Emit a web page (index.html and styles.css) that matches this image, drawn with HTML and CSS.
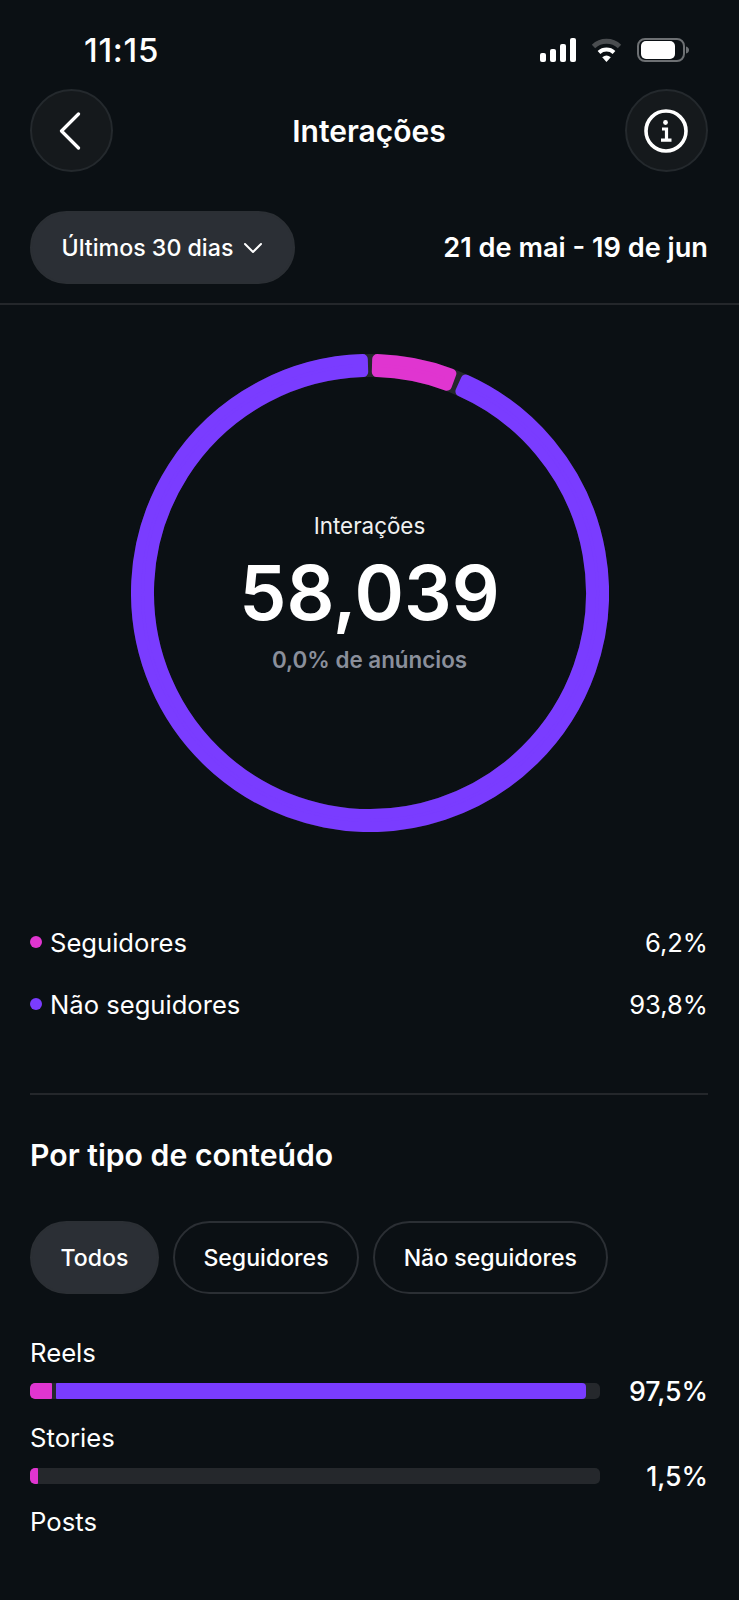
FILE: index.html
```html
<!DOCTYPE html>
<html lang="pt">
<head>
    <meta charset="UTF-8">
    <meta name="viewport" content="width=device-width, initial-scale=1.0">
    <title>Interações</title>
    <link rel="stylesheet" href="styles.css">
</head>
<body>

<div class="status-bar">
    <span class="clock">11:15</span>
    <div class="status-icons">
        <svg width="36" height="24" viewBox="0 0 36 24" fill="#fff">
            <rect x="0" y="15" width="6" height="9" rx="2"/>
            <rect x="10" y="11" width="6" height="13" rx="2"/>
            <rect x="20" y="6" width="6" height="18" rx="2"/>
            <rect x="30" y="0" width="6" height="24" rx="2"/>
        </svg>
        <svg width="31" height="24" viewBox="0 0 31 24" fill="none">
            <path d="M2.5 8.5A19 19 0 0 1 28.5 8.5" stroke="#4a4d50" stroke-width="5"/>
            <path d="M8 14.5A11 11 0 0 1 23 14.5" stroke="#fff" stroke-width="4"/>
            <path d="M11.2 19.2Q15.5 15.8 19.8 19.2L15.5 24Z" fill="#fff"/>
        </svg>
        <svg width="52" height="24" viewBox="0 0 52 24" fill="none">
            <rect x="1" y="1" width="46" height="22" rx="7" stroke="#6d7073" stroke-width="2"/>
            <rect x="4" y="3" width="34" height="18" rx="5" fill="#fff"/>
            <path d="M49 8.5Q52 9.5 52 12T49 15.5Z" fill="#6d7073"/>
        </svg>
    </div>
</div>

<header class="top-bar">
    <button class="round-btn">
        <svg class="back-icon" width="22" height="38" viewBox="0 0 22 38" fill="none" stroke="#fff" stroke-width="3.2" stroke-linecap="round" stroke-linejoin="round">
            <path d="M19.5 2L2.5 19L19.5 36"/>
        </svg>
    </button>
    <h1 class="title">Interações</h1>
    <button class="round-btn">
        <svg width="44" height="44" viewBox="0 0 44 44" fill="none" stroke="#fff">
            <circle cx="22" cy="22" r="20" stroke-width="3.6"/>
            <circle cx="21.5" cy="13.5" r="2.4" fill="#fff" stroke="none"/>
            <path d="M18 20H22.5V31M17 31.2H27.5" stroke-width="3.2"/>
        </svg>
    </button>
</header>

<div class="range-row">
    <div class="pill pill-active range-pill">
        Últimos 30 dias
        <svg width="20" height="12" viewBox="0 0 20 12" fill="none" stroke="#fff" stroke-width="2" stroke-linecap="round" stroke-linejoin="round">
            <path d="M2 2L10 10L18 2"/>
        </svg>
    </div>
    <span class="range-dates">21 de mai - 19 de jun</span>
</div>

<section class="ring-section">
    <div class="ring">
        <svg width="478" height="478" viewBox="-239 -239 478 478">
            <circle class="ring-track" r="227.5"/>
            <!-- segments are inset by 5 and stroked with a round join to get soft corners -->
            <path class="seg seg-purple" d="M95.76 -213.51A234 234 0 1 1 -7.19 -233.89L-6.79 -220.90A221 221 0 1 0 90.44 -201.65Z"/>
            <path class="seg seg-pink" d="M7.19 -233.89A234 234 0 0 1 81.37 -219.40L76.85 -207.21A221 221 0 0 0 6.79 -220.90Z"/>
        </svg>
        <div class="ring-center">
            <div class="ring-label">Interações</div>
            <div class="ring-value">58,039</div>
            <div class="ring-note">0,0% de anúncios</div>
        </div>
    </div>
</section>

<section class="legend">
    <div class="legend-row">
        <span class="dot dot-pink"></span>
        <span class="legend-name">Seguidores</span>
        <span>6,2%</span>
    </div>
    <div class="legend-row">
        <span class="dot dot-purple"></span>
        <span class="legend-name">Não seguidores</span>
        <span>93,8%</span>
    </div>
</section>

<section class="content-types">
    <h2>Por tipo de conteúdo</h2>
    <div class="chips">
        <div class="pill pill-active">Todos</div>
        <div class="pill">Seguidores</div>
        <div class="pill">Não seguidores</div>
    </div>

    <div class="type-row">
        <div class="type-name">Reels</div>
        <div class="type-line">
            <div class="bar">
                <div class="bar-pink" style="width: 22px"></div>
                <div class="bar-purple" style="width: 530px"></div>
            </div>
            <span class="type-value">97,5%</span>
        </div>
    </div>
    <div class="type-row">
        <div class="type-name">Stories</div>
        <div class="type-line">
            <div class="bar">
                <div class="bar-pink" style="width: 8px"></div>
            </div>
            <span class="type-value">1,5%</span>
        </div>
    </div>
    <div class="type-row">
        <div class="type-name">Posts</div>
    </div>
</section>

</body>
</html>
```

FILE: styles.css
```css
* {
    box-sizing: border-box;
}
body {
    margin: 0;
    height: 1600px;
    overflow: hidden;
    background-color: #0b1014;
    color: #fff;
    font-family: Inter, "Noto Sans", sans-serif;
}

/* status bar */
.status-bar {
    display: flex;
    justify-content: space-between;
    align-items: center;
    height: 89px;
    padding: 11px 50px 0 84px;
}
.clock {
    font-size: 33px;
    font-weight: 500;
    letter-spacing: 0.7px;
}
.status-icons {
    display: flex;
    align-items: center;
    gap: 15px;
}

/* header */
.top-bar {
    display: flex;
    justify-content: space-between;
    align-items: center;
    padding: 0 31px 0 30px;
}
.round-btn {
    display: flex;
    justify-content: center;
    align-items: center;
    width: 83px;
    height: 83px;
    padding: 0;
    background-color: #15191c;
    border: 2px solid #24292d;
    border-radius: 50%;
}
.back-icon {
    margin-right: 3px;
}
.title {
    margin: 0;
    font-size: 30px;
    font-weight: 600;
}

/* date range */
.range-row {
    display: flex;
    justify-content: space-between;
    align-items: center;
    margin-top: 39px;
    padding: 0 31px 19px 30px;
    border-bottom: 2px solid #24272b;
}
.pill {
    display: flex;
    align-items: center;
    gap: 10px;
    height: 73px;
    padding: 0 28.5px;
    border: 2px solid #2b2f34;
    border-radius: 37px;
    font-size: 23.1px;
    font-weight: 500;
}
.range-pill {
    padding: 0 29.5px;
    font-size: 23.2px;
}
.pill-active {
    background-color: #2b2f35;
}
.range-dates {
    font-size: 27.2px;
    font-weight: 600;
}

/* donut */
.ring-section {
    display: flex;
    justify-content: center;
    padding-top: 49px;
}
.ring {
    position: relative;
    width: 478px;
    height: 478px;
}
.ring svg {
    display: block;
}
.ring-track {
    fill: none;
    stroke: #24272b;
    stroke-width: 23;
}
.seg {
    stroke-width: 10;
    stroke-linejoin: round;
}
.seg-purple {
    fill: #7a3cff;
    stroke: #7a3cff;
}
.seg-pink {
    fill: #e035d0;
    stroke: #e035d0;
}
.ring-center {
    position: absolute;
    inset: 0;
    display: flex;
    flex-direction: column;
    justify-content: center;
    align-items: center;
}
.ring-label {
    font-size: 22.4px;
    line-height: 30px;
    color: #f0f0f0;
}
.ring-value {
    font-size: 75px;
    font-weight: 600;
    line-height: 104px;
}
.ring-note {
    font-size: 22.4px;
    font-weight: 600;
    line-height: 30px;
    color: #8a8f9b;
}

/* legend */
.legend {
    margin: 79px 31px 0 30px;
    padding-bottom: 58px;
    border-bottom: 2px solid #24272b;
}
.legend-row {
    display: flex;
    align-items: center;
    height: 62px;
    font-size: 25.6px;
}
.legend-name {
    flex: 1;
    margin-left: 8px;
}
.dot {
    width: 12px;
    height: 12px;
    border-radius: 50%;
}
.dot-pink {
    background-color: #e035d0;
}
.dot-purple {
    background-color: #7a3cff;
}

/* content types */
.content-types {
    padding: 0 31px 0 30px;
}
.content-types h2 {
    margin: 40px 0 46px;
    font-size: 30.2px;
    font-weight: 600;
    line-height: 40px;
}
.chips {
    display: flex;
    gap: 14px;
    margin-bottom: 41px;
}
.type-row {
    margin-bottom: 10.5px;
}
.type-name {
    font-size: 25.7px;
    line-height: 36px;
}
.type-line {
    display: flex;
    justify-content: space-between;
    align-items: center;
    height: 36px;
    margin-top: 2px;
}
.bar {
    display: flex;
    gap: 4px;
    width: 570px;
    height: 16px;
    background-color: #25282c;
    border-radius: 5px;
    overflow: hidden;
}
.bar-pink {
    background-color: #e035d0;
    border-radius: 4px 1px 1px 4px;
}
.bar-purple {
    background-color: #7a3cff;
    border-radius: 1px 4px 4px 1px;
}
.type-value {
    font-size: 26.7px;
    font-weight: 500;
}
```
